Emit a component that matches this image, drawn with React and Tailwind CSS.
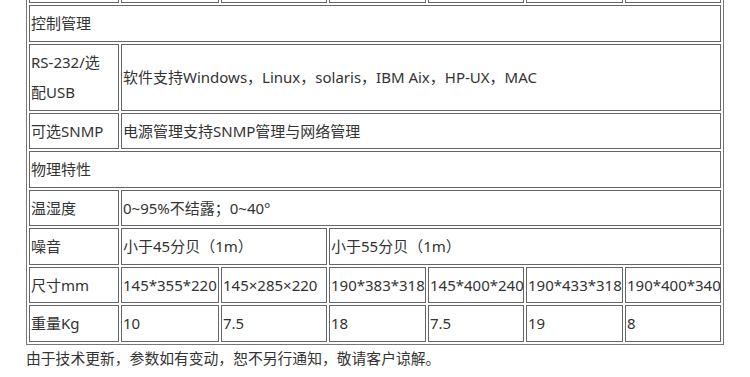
import React from "react";

const td = "border border-[#666] px-[1px] py-[2px] leading-[30.5px] align-middle text-left whitespace-nowrap";

export default function App() {
  const sizes = ["145*355*220", "145×285×220", "190*383*318", "145*400*240", "190*433*318", "190*400*340"];
  const weights = ["10", "7.5", "18", "7.5", "19", "8"];
  return (
    <div
      className="w-[750px] h-[377px] overflow-hidden bg-white text-[#333] text-[15px]"
      style={{ fontFamily: '"Noto Sans", "Noto Sans CJK SC", sans-serif' }}
    >
      <table className="ml-[26px] mt-[-10px] w-[698px] table-fixed border-separate border-spacing-[2px] border border-[#777]">
        <colgroup>
          <col className="w-[90px]" />
          <col className="w-[98px]" />
          <col className="w-[106px]" />
          <col className="w-[97px]" />
          <col className="w-[96px]" />
          <col className="w-[97px]" />
          <col className="w-[96px]" />
        </colgroup>
        <tbody>
          <tr>
            {Array.from({ length: 7 }).map((_, i) => (
              <td key={i} className="border border-[#666] h-[10px] p-0"></td>
            ))}
          </tr>
          <tr>
            <td colSpan={7} className={td}>控制管理</td>
          </tr>
          <tr>
            <td className={td + " whitespace-normal"}>RS-232/选<br />配USB</td>
            <td colSpan={6} className={td}>软件支持Windows，Linux，solaris，IBM Aix，HP-UX，MAC</td>
          </tr>
          <tr>
            <td className={td}>可选SNMP</td>
            <td colSpan={6} className={td}>电源管理支持SNMP管理与网络管理</td>
          </tr>
          <tr>
            <td colSpan={7} className={td}>物理特性</td>
          </tr>
          <tr>
            <td className={td}>温湿度</td>
            <td colSpan={6} className={td}>0~95%不结露；0~40°</td>
          </tr>
          <tr>
            <td className={td}>噪音</td>
            <td colSpan={2} className={td}>小于45分贝（1m）</td>
            <td colSpan={4} className={td}>小于55分贝（1m）</td>
          </tr>
          <tr>
            <td className={td}>尺寸mm</td>
            {sizes.map((s) => (
              <td key={s} className={td}>{s}</td>
            ))}
          </tr>
          <tr>
            <td className={td}>重量Kg</td>
            {weights.map((w, i) => (
              <td key={i} className={td}>{w}</td>
            ))}
          </tr>
        </tbody>
      </table>
      <p className="ml-[26px] mt-[2px] text-[14.8px] leading-[22px]">由于技术更新，参数如有变动，恕不另行通知，敬请客户谅解。</p>
    </div>
  );
}
